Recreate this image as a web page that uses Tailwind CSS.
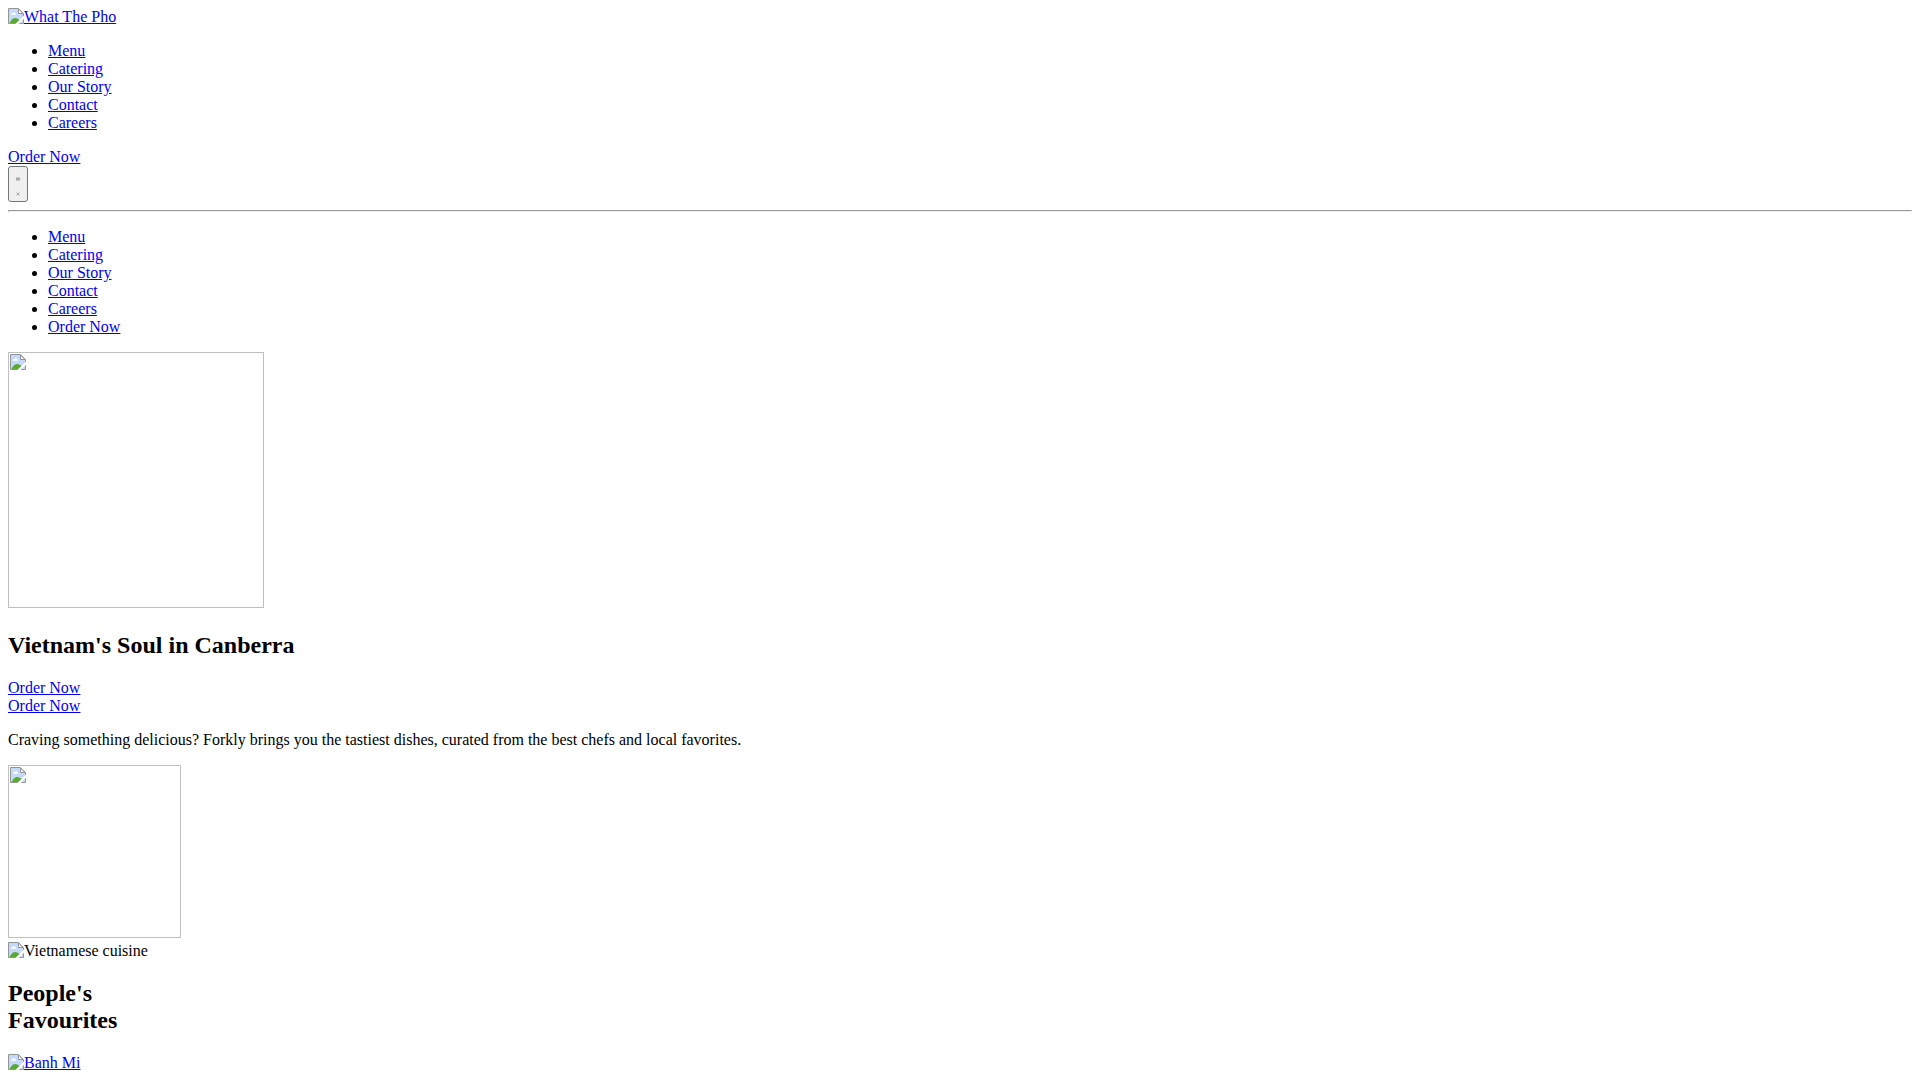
<!DOCTYPE html>
<html lang="en">
<head>
<meta charset="utf-8">
<title>What The Pho</title>
<script src="https://cdn.jsdelivr.net/npm/@tailwindcss/browser@4"></script>
</head>
<body class="h-screen overflow-hidden bg-white p-2 font-['Liberation_Serif',serif] text-base leading-[18px] text-black">
<svg class="hidden">
  <symbol id="pic" viewBox="0 0 16 16">
    <path d="M1 1h9.500L15 5.500V15H1z" fill="#c6d9fa"/>
    <path d="M3 6.500c0-1 .8-1.500 1.500-1.300C5 3.800 7 4 7.200 5.200 8 5.200 8.500 6 8 6.700H3z" fill="#fff"/>
    <path d="M1.500 15C3 11.500 6 9.500 8.500 10.200L12 12l-2 3z" fill="#5aa935"/>
    <path d="M.5 15.500V.5h10l5 5v10z" fill="none" stroke="#949494"/>
    <path d="M10.500 1v4.500H15z" fill="#fff" stroke="#949494"/>
    <path d="M16 7.500L7.300 16h3.500L16 10.800z" fill="#fff"/>
  </symbol>
</svg>
<header>
  <a href="#" class="flex items-start text-[#0000ee]"><svg class="size-4"><use href="#pic"/></svg><span class="underline">What The Pho</span></a>
  <ul class="my-4 list-disc pl-10">
    <li><a href="#" class="text-[#0000ee] underline">Menu</a></li>
    <li><a href="#" class="text-[#0000ee] underline">Catering</a></li>
    <li><a href="#" class="text-[#0000ee] underline">Our Story</a></li>
    <li><a href="#" class="text-[#0000ee] underline">Contact</a></li>
    <li><a href="#" class="text-[#0000ee] underline">Careers</a></li>
  </ul>
  <div><a href="#" class="text-[#0000ee] underline">Order Now</a></div>
  <button class="block h-9 w-5 rounded-[3px] border border-[#767676] bg-[#efefef]">
    <svg class="block h-[34px] w-[18px]" viewBox="0 0 18 34"><path d="M7 10.500h4v3H7z" fill="#a8a8a8"/><path d="M7.500 25.500l3 3M10.500 25.500l-3 3" stroke="#888" stroke-width=".7"/></svg>
  </button>
  <hr class="mt-2 h-0.5 border border-t-[#9a9a9a] border-r-[#eeeeee] border-b-[#eeeeee] border-l-[#9a9a9a]">
  <ul class="my-4 list-disc pl-10">
    <li><a href="#" class="text-[#0000ee] underline">Menu</a></li>
    <li><a href="#" class="text-[#0000ee] underline">Catering</a></li>
    <li><a href="#" class="text-[#0000ee] underline">Our Story</a></li>
    <li><a href="#" class="text-[#0000ee] underline">Contact</a></li>
    <li><a href="#" class="text-[#0000ee] underline">Careers</a></li>
    <li><a href="#" class="text-[#0000ee] underline">Order Now</a></li>
  </ul>
</header>
<main>
  <div class="size-64 border border-[#c0c0c0] p-px"><svg class="block size-4"><use href="#pic"/></svg></div>
  <h2 class="mt-6 mb-5 text-2xl leading-[27px] font-bold">Vietnam's Soul in Canberra</h2>
  <div><a href="#" class="text-[#0000ee] underline">Order Now</a></div>
  <div><a href="#" class="text-[#0000ee] underline">Order Now</a></div>
  <p class="my-4">Craving something delicious? Forkly brings you the tastiest dishes, curated from the best chefs and local favorites.</p>
  <div class="size-[173px] border border-[#c0c0c0] p-px"><svg class="block size-4"><use href="#pic"/></svg></div>
  <div class="mt-1 flex items-start"><svg class="size-4"><use href="#pic"/></svg><span>Vietnamese cuisine</span></div>
  <h2 class="my-5 text-2xl leading-[27px] font-bold">People's<br>Favourites</h2>
  <a href="#" class="flex items-start text-[#0000ee]"><svg class="size-4"><use href="#pic"/></svg><span class="underline">Banh Mi</span></a>
</main>
</body>
</html>
